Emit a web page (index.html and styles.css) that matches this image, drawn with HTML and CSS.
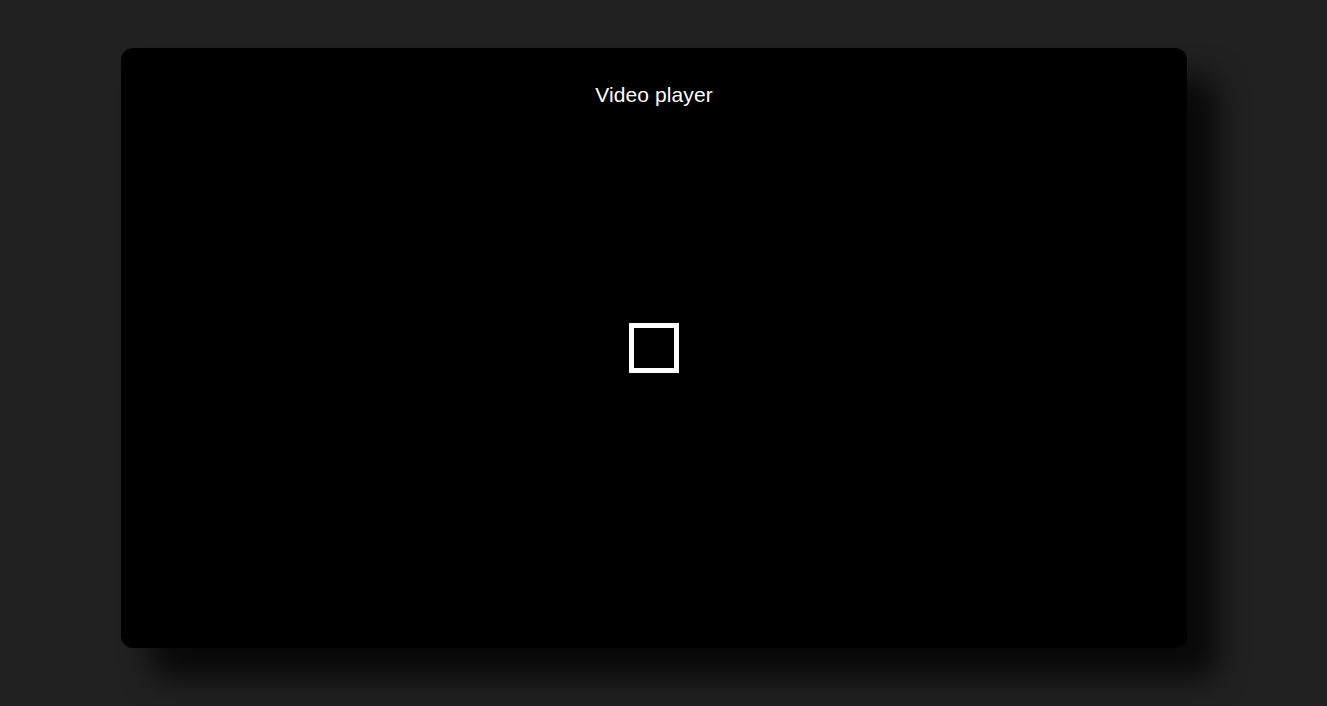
FILE: index.html
```html
<!DOCTYPE html>
<html lang="en">
<head>
<meta charset="utf-8">
<title>Video player</title>
<link rel="stylesheet" href="styles.css">
</head>
<body>
<main class="stage">
  <section class="player">
    <h1 class="player-title">Video player</h1>
    <div class="player-icon" aria-label="stop"></div>
  </section>
</main>
</body>
</html>
```

FILE: styles.css
```css
html, body {
  margin: 0;
  padding: 0;
  background: #212121;
  height: 100%;
  overflow: hidden;
}
body {
  font-family: "Liberation Sans", Arial, sans-serif;
}
.stage {
  padding: 48px 0 0 121px;
}
.player {
  width: 1066px;
  height: 600px;
  background: #000;
  border-radius: 12px;
  box-shadow: 30px 30px 30px rgba(0, 0, 0, 0.75);
  display: grid;
  grid-template: 1fr / 1fr;
  place-items: center;
}
.player-title {
  grid-area: 1 / 1;
  align-self: start;
  margin: 35px 0 0;
  font-size: 21px;
  font-weight: 400;
  line-height: 24px;
  color: #fff;
  letter-spacing: 0.1px;
}
.player-icon {
  grid-area: 1 / 1;
  width: 40px;
  height: 40px;
  border: 5px solid #fff;
}
```
